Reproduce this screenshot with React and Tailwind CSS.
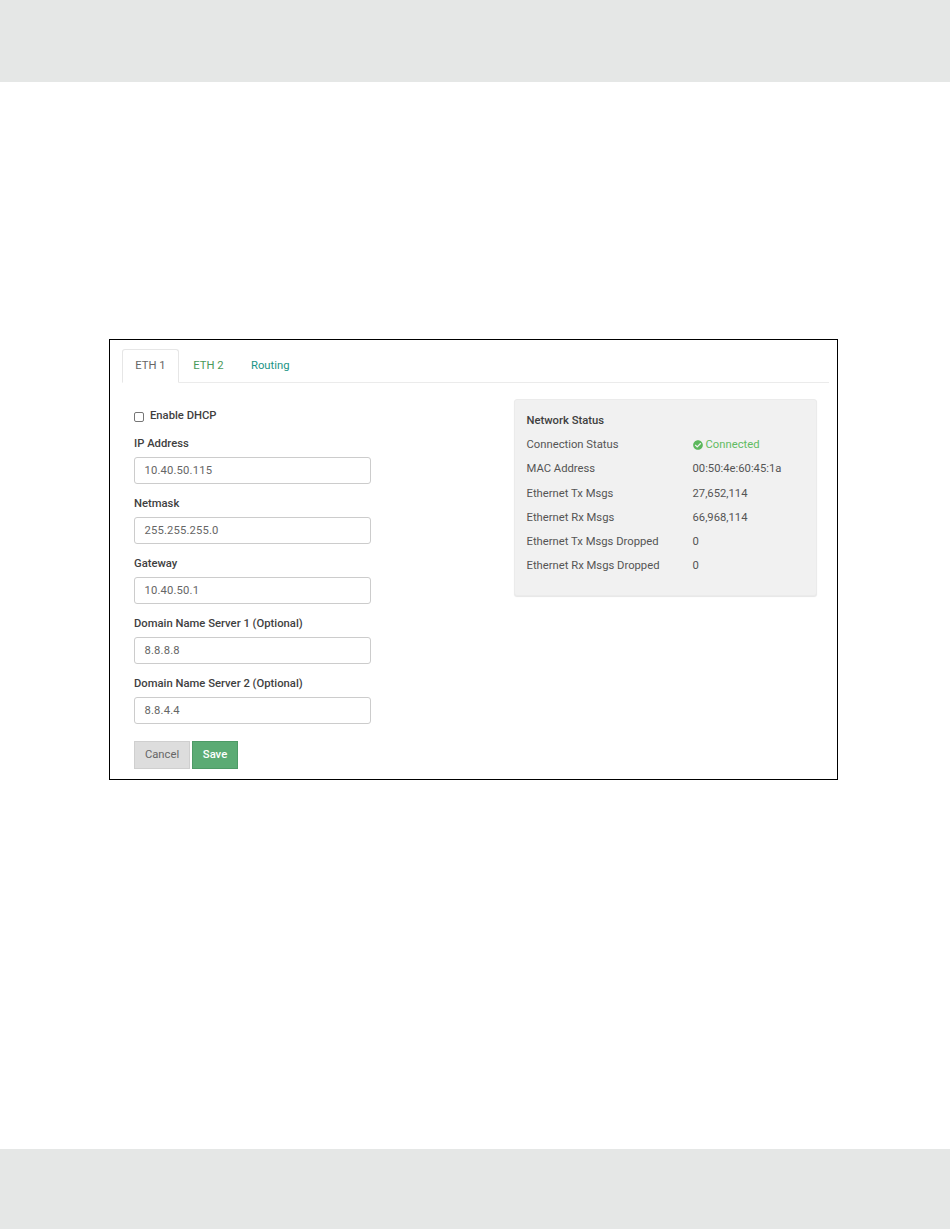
import React from "react";

const fields = [
  ["IP Address", "10.40.50.115"],
  ["Netmask", "255.255.255.0"],
  ["Gateway", "10.40.50.1"],
  ["Domain Name Server 1 (Optional)", "8.8.8.8"],
  ["Domain Name Server 2 (Optional)", "8.8.4.4"],
];

const stats = [
  ["MAC Address", "00:50:4e:60:45:1a"],
  ["Ethernet Tx Msgs", "27,652,114"],
  ["Ethernet Rx Msgs", "66,968,114"],
  ["Ethernet Tx Msgs Dropped", "0"],
  ["Ethernet Rx Msgs Dropped", "0"],
];

export default function App() {
  return (
    <div className="w-[950px] h-[1229px] flex flex-col bg-white font-['Roboto',sans-serif] text-[11.25px] text-[#3f3f3f]">
      <div className="h-[82px] shrink-0 bg-[#e5e7e6]" />
      <main className="flex-1 pt-[257px] pl-[109px]">
        <div className="w-[729px] h-[441px] border border-black pt-[9px] pl-[12px] pr-[8px]">
          <div className="flex h-[34px] border-b border-[#ebebeb]">
            <div className="w-[57px] h-[34px] flex items-center justify-center bg-white border border-[#e6e6e6] border-b-white rounded-t-[3px] text-[#666666]">ETH 1</div>
            <div className="w-[59px] pt-[2px] flex items-center justify-center text-[#4a9a5a]">ETH 2</div>
            <div className="pl-[13px] pt-[2px] flex items-center text-[#1a9486]">Routing</div>
          </div>
          <div className="flex pl-[12px] pt-[16px]">
            <div className="w-[237px] pt-[9px]">
              <label className="flex items-center h-[16px] mb-[11px] font-medium">
                <span className="w-[10px] h-[10px] border border-[#767676] rounded-[2px] bg-white mr-[6px] mt-[2px]" />
                <span>Enable DHCP</span>
              </label>
              <div className="flex flex-col gap-[11px]">
                {fields.map(([label, value]) => (
                  <div key={label}>
                    <div className="h-[16px] leading-[16px] mt-[1px] mb-[5px] font-medium">{label}</div>
                    <div className="h-[27px] border border-[#cccccc] rounded-[3px] px-[9.5px] pt-[1px] flex items-center text-[#666666] tracking-[0.15px]">{value}</div>
                  </div>
                ))}
              </div>
              <div className="flex gap-[2px] mt-[17px]">
                <button className="w-[56px] h-[28px] bg-[#dddddd] border border-[#cfcfcf] text-[#666666]">Cancel</button>
                <button className="w-[46px] h-[28px] bg-[#5bab74] border border-[#4d9a66] text-white font-medium">Save</button>
              </div>
            </div>
            <section className="ml-[143px] w-[303px] h-[197px] bg-[#f1f1f1] border border-[#ebebeb] rounded-[3px] shadow-[0_1px_1px_rgba(0,0,0,0.1)] pt-[13px] pl-[11.5px] pr-[12px]">
              <div className="h-[16px] leading-[16px] font-medium mb-[8px]">Network Status</div>
              <div className="flex h-[24.3px] items-start">
                <span className="w-[166px] text-[#555555]">Connection Status</span>
                <span className="flex items-center text-[#62bb62]">
                  <svg viewBox="0 0 512 512" className="w-[10px] h-[10px] mr-[3px] fill-[#5cb85c]">
                    <path d="M504 256c0 137-111 248-248 248S8 393 8 256 119 8 256 8s248 111 248 248zM227.3 387.3l184-184c6.2-6.2 6.2-16.4 0-22.6l-22.6-22.6c-6.2-6.2-16.4-6.2-22.6 0L216 308.1l-70.1-70.1c-6.2-6.2-16.4-6.2-22.6 0l-22.6 22.6c-6.2 6.2-6.2 16.4 0 22.6l104 104c6.2 6.2 16.4 6.2 22.6 0z" />
                  </svg>
                  Connected
                </span>
              </div>
              {stats.map(([k, v]) => (
                <div key={k} className="flex h-[24.3px] items-start">
                  <span className="w-[166px] text-[#555555]">{k}</span>
                  <span className="text-[#555555]">{v}</span>
                </div>
              ))}
            </section>
          </div>
        </div>
      </main>
      <div className="h-[80px] shrink-0 bg-[#e5e7e6]" />
    </div>
  );
}
